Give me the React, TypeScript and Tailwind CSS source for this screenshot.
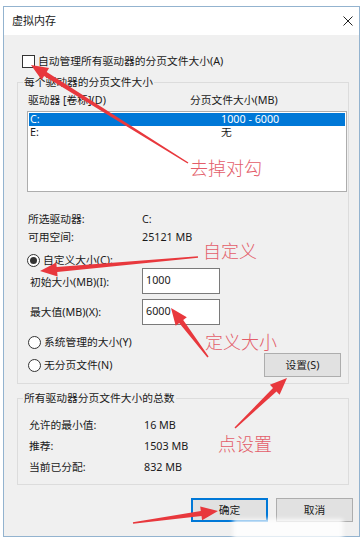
import React from 'react';

type Pt = [number, number];

// tapered red arrow, thin at the tail and a wide head at the tip
const arrowPoints = (tail: Pt, tip: Pt, shaft = 5, headLen = 17, headW = 14) => {
  const dx = tip[0] - tail[0];
  const dy = tip[1] - tail[1];
  const len = Math.hypot(dx, dy);
  const ux = dx / len;
  const uy = dy / len;
  const nx = -uy;
  const ny = ux;
  const bx = tip[0] - ux * headLen;
  const by = tip[1] - uy * headLen;
  const p = (x: number, y: number) => `${x.toFixed(1)},${y.toFixed(1)}`;
  return [
    p(tail[0] + nx * 0.7, tail[1] + ny * 0.7),
    p(bx + (nx * shaft) / 2, by + (ny * shaft) / 2),
    p(bx + (nx * headW) / 2, by + (ny * headW) / 2),
    p(tip[0], tip[1]),
    p(bx - (nx * headW) / 2, by - (ny * headW) / 2),
    p(bx - (nx * shaft) / 2, by - (ny * shaft) / 2),
    p(tail[0] - nx * 0.7, tail[1] - ny * 0.7),
  ].join(' ');
};

const arrows: [Pt, Pt][] = [
  [[188, 163], [31, 65]],
  [[198, 257], [40, 271]],
  [[208, 357], [171, 308]],
  [[235, 428], [287, 378]],
  [[133, 523], [218, 511]],
];

const Radio = ({ checked = false }: { checked?: boolean }) => (
  <span className="w-[13px] h-[13px] rounded-full border border-[#333333] bg-white flex items-center justify-center shrink-0">
    {checked && <span className="w-[7px] h-[7px] rounded-full bg-[#333333]" />}
  </span>
);

const App = () => {
  return (
    <div className="w-[360px] h-[543px] bg-white relative overflow-hidden pt-[6px] pl-[3px] text-[10.75px] text-[#1a1a1a] font-['Noto_Sans','Noto_Sans_CJK_SC',sans-serif]">
      <div className="w-[357px] h-[531px] border border-[#93b3cf] flex flex-col">
        {/* title bar */}
        <div className="h-[28px] bg-white flex items-center justify-between pl-[8px] pr-[6px] shrink-0">
          <span className="text-[11px] leading-[14px]">虚拟内存</span>
          <svg width="10" height="10" viewBox="0 0 10 10" className="text-[#222]">
            <path d="M0.5 0.5L9.5 9.5M9.5 0.5L0.5 9.5" stroke="currentColor" strokeWidth="1" />
          </svg>
        </div>

        <div className="flex-1 bg-[#f0f0f0] flex flex-col">
          <div className="mt-[19px] h-[14px] flex items-center pl-[18px]">
            <span className="w-[13px] h-[13px] border border-[#333333] bg-white shrink-0" />
            <span className="ml-[3px] leading-[14px]">自动管理所有驱动器的分页文件大小(A)</span>
          </div>

          <fieldset className="mt-[7px] ml-[13px] mr-[10px] border border-[#dcdcdc] pb-[6px]">
            <legend className="ml-[5px] px-[1px] leading-[14px]">每个驱动器的分页文件大小</legend>
            <div className="mt-[4px] h-[14px] flex items-center pl-[10px] leading-[14px]">
              <span className="w-[162px]">驱动器 [卷标](D)</span>
              <span>分页文件大小(MB)</span>
            </div>
            <div className="mt-[4px] ml-[9px] mr-[1px] h-[81px] border border-[#adadad] bg-white p-[1px]">
              <div className="h-[13px] flex items-center bg-[#0078d7] text-white pl-[1px] leading-[13px]">
                <span className="w-[191px]">C:</span>
                <span>1000 - 6000</span>
              </div>
              <div className="h-[13px] flex items-center pl-[1px] leading-[13px]">
                <span className="w-[191px]">E:</span>
                <span>无</span>
              </div>
            </div>

            <div className="mt-[18px] h-[18px] flex items-center pl-[10px]">
              <span className="w-[114px]">所选驱动器:</span>
              <span>C:</span>
            </div>
            <div className="h-[18px] flex items-center pl-[10px]">
              <span className="w-[114px]">可用空间:</span>
              <span>25121 MB</span>
            </div>

            <div className="mt-[7px] h-[14px] flex items-center pl-[9px]">
              <Radio checked />
              <span className="ml-[3px] leading-[14px]">自定义大小(C):</span>
            </div>
            <div className="mt-[1px] h-[26px] flex items-center pl-[12px]">
              <span className="w-[112px] pt-[2px]">初始大小(MB)(I):</span>
              <div className="w-[78px] h-[26px] border border-[#7a7a7a] bg-white pl-[3px] pt-[4px] leading-[14px]">1000</div>
            </div>
            <div className="mt-[5px] h-[26px] flex items-center pl-[12px]">
              <span className="w-[112px]">最大值(MB)(X):</span>
              <div className="w-[78px] h-[26px] border border-[#7a7a7a] bg-white pl-[3px] pt-[4px] leading-[14px]">6000</div>
            </div>

            <div className="mt-[10px] h-[14px] flex items-center pl-[10px]">
              <Radio />
              <span className="ml-[3px] leading-[14px]">系统管理的大小(Y)</span>
            </div>
            <div className="mt-[4px] h-[24px] flex items-center justify-between pl-[10px] pr-[7px]">
              <div className="flex items-center">
                <Radio />
                <span className="ml-[3px] leading-[14px]">无分页文件(N)</span>
              </div>
              <button className="w-[77px] h-[24px] border border-[#adadad] bg-[#e1e1e1] leading-[14px]">设置(S)</button>
            </div>
          </fieldset>

          <fieldset className="mt-[7px] ml-[13px] mr-[10px] border border-[#dcdcdc] pb-[6px]">
            <legend className="ml-[5px] px-[1px] leading-[14px]">所有驱动器分页文件大小的总数</legend>
            <div className="mt-[10px] h-[21px] flex items-center pl-[11px]">
              <span className="w-[115px]">允许的最小值:</span>
              <span>16 MB</span>
            </div>
            <div className="h-[21px] flex items-center pl-[11px]">
              <span className="w-[115px]">推荐:</span>
              <span>1503 MB</span>
            </div>
            <div className="h-[21px] flex items-center pl-[11px]">
              <span className="w-[115px]">当前已分配:</span>
              <span>832 MB</span>
            </div>
          </fieldset>

          <div className="mt-[13px] flex justify-end gap-[8px] pr-[6px]">
            <button className="w-[77px] h-[24px] border-2 border-[#0078d7] bg-[#e1e1e1] leading-[14px]">确定</button>
            <button className="w-[77px] h-[24px] border border-[#adadad] bg-[#e1e1e1] leading-[14px]">取消</button>
          </div>
        </div>
      </div>

      {/* annotations drawn on top of the screenshot */}
      <div className="absolute left-[233px] top-[519px] w-[110px] h-[20px] bg-white/85 blur-[2px]" />
      <svg className="absolute inset-0 pointer-events-none" width="360" height="543" viewBox="0 0 360 543">
        {arrows.map(([tail, tip], i) => (
          <polygon key={i} points={arrowPoints(tail, tip)} fill="#e8383d" />
        ))}
      </svg>
      <span className="absolute left-[190px] top-[157px] text-[18px] leading-[20px] text-[#e35d6a] font-light font-['Noto_Sans_CJK_SC',sans-serif]">去掉对勾</span>
      <span className="absolute left-[203px] top-[240px] text-[18px] leading-[20px] text-[#e35d6a] font-light font-['Noto_Sans_CJK_SC',sans-serif]">自定义</span>
      <span className="absolute left-[205px] top-[331px] text-[18px] leading-[20px] text-[#e35d6a] font-light font-['Noto_Sans_CJK_SC',sans-serif]">定义大小</span>
      <span className="absolute left-[218px] top-[433px] text-[18px] leading-[20px] text-[#e35d6a] font-light font-['Noto_Sans_CJK_SC',sans-serif]">点设置</span>
    </div>
  );
};

export default App;
